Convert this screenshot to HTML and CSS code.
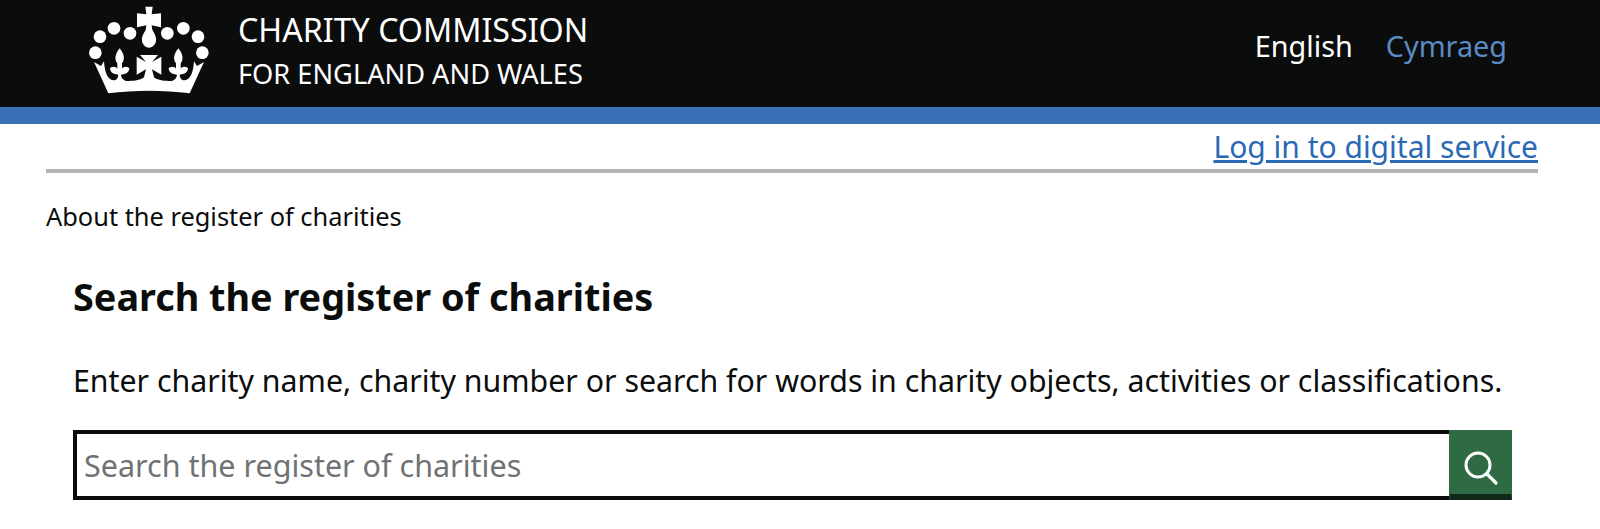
FILE: index.html
```html
<!DOCTYPE html>
<html lang="en">
<head>
    <meta charset="UTF-8">
    <meta name="viewport" content="width=device-width, initial-scale=1.0">
    <title>Search the register of charities</title>
    <link rel="stylesheet" href="styles.css">
</head>
<body>
<header class="site-header">
    <div class="brand">
        <svg class="crest" viewBox="0 0 420 315" aria-hidden="true">
            <circle cx="60" cy="110" r="19"/>
            <circle cx="102" cy="85" r="19"/>
            <circle cx="150" cy="100" r="19"/>
            <circle cx="262" cy="100" r="19"/>
            <circle cx="310" cy="85" r="19"/>
            <circle cx="354" cy="110" r="19"/>
            <circle cx="46" cy="158" r="19"/>
            <circle cx="367" cy="158" r="19"/>
            <path d="M196 20H218L215 43 243 40V82L215 76 217 90C226 104 230 114 228 124 225 136 216 143 207 143 198 143 189 136 186 124 184 114 188 104 197 90L199 76 171 82V40L199 43Z"/>
            <path id="crownHalf" d="M42 186L63 198 72 184C74 215 82 240 100 241 110 241 114 234 115 224L102 221C94 218 90 212 90 204 100 198 108 200 112 206L112 190C102 178 106 160 119 145 132 160 136 178 126 190L126 206C130 200 138 198 148 204 148 212 144 218 136 221L123 224C124 236 132 244 148 243 165 243 182 240 192 232L198 208 170 224 170 170 198 186 180 165H208V272C165 272 125 275 85 280Z"/>
            <use href="#crownHalf" transform="translate(414) scale(-1,1)"/>
        </svg>
        <div class="brand-text">
            <span class="brand-name">CHARITY COMMISSION</span>
            <span class="brand-sub">FOR ENGLAND AND WALES</span>
        </div>
    </div>
    <nav class="lang-nav">
        <a href="#" class="lang-current">English</a>
        <a href="#" class="lang-other">Cymraeg</a>
    </nav>
</header>
<div class="header-rule"></div>

<div class="container">
    <div class="top-links">
        <a href="#" class="login-link">Log in to digital service</a>
    </div>
    <p class="crumb">About the register of charities</p>
    <main class="search-panel">
        <h1>Search the register of charities</h1>
        <p class="hint">Enter charity name, charity number or search for words in charity objects, activities or classifications.</p>
        <form class="search-form">
            <input class="search-input" type="text" placeholder="Search the register of charities">
            <button class="search-btn" type="button" aria-label="Search">
                <svg viewBox="0 0 36 36" width="36" height="36" aria-hidden="true">
                    <circle cx="15" cy="15" r="12" fill="none" stroke="#fff" stroke-width="3"/>
                    <path d="M24 24L33 33" fill="none" stroke="#fff" stroke-width="3.2" stroke-linecap="round"/>
                </svg>
            </button>
        </form>
    </main>
</div>
</body>
</html>
```

FILE: styles.css
```css
/* General Styles */
body {
    font-family: 'Noto Sans', Arial, sans-serif;
    margin: 0;
    padding: 0;
    background: #fff;
    color: #0b0c0c;
}

/* Header */
.site-header {
    display: flex;
    justify-content: space-between;
    height: 107px;
    padding: 0 93px 0 80px;
    background: #0b0c0c;
}

.brand {
    display: flex;
    gap: 18px;
}

.crest {
    width: 140px;
    height: 105px;
    fill: #fff;
}

.brand-text {
    display: flex;
    flex-direction: column;
    padding-top: 10px;
    color: #fff;
}

.brand-name {
    font-size: 32.2px;
    line-height: 40px;
}

.brand-sub {
    font-size: 27.2px;
    line-height: 34px;
    margin-top: 7px;
}

.lang-nav {
    display: flex;
    gap: 33px;
    padding-top: 27px;
    font-size: 28.8px;
    line-height: 38px;
}

.lang-nav a {
    text-decoration: none;
}

.lang-current {
    color: #fff;
}

.lang-other {
    color: #5b8ac4;
}

.header-rule {
    height: 17px;
    background: #3a70b5;
}

/* Main content */
.container {
    padding: 0 62px 0 46px;
}

.top-links {
    display: flex;
    justify-content: flex-end;
    height: 45px;
    border-bottom: 4px solid #b1b4b6;
}

.login-link {
    font-size: 30px;
    line-height: 46px;
    color: #2a69b4;
}

.crumb {
    margin: 26px 0 0;
    font-size: 25.4px;
    line-height: 34px;
}

.search-panel {
    padding: 0 26px 0 27px;
}

h1 {
    margin: 39px 0 0;
    font-size: 37.8px;
    line-height: 50px;
    font-weight: 700;
}

.hint {
    margin: 39px 0 0;
    font-size: 30.3px;
    line-height: 40px;
}

.search-form {
    display: flex;
    margin-top: 29px;
}

.search-input {
    flex: 1;
    box-sizing: border-box;
    height: 70px;
    padding: 0 7px;
    border: 4px solid #0b0c0c;
    border-right: 0;
    border-radius: 0;
    outline: none;
    font-family: inherit;
    font-size: 30.5px;
}

.search-input::placeholder {
    color: #6f7274;
    opacity: 1;
}

.search-btn {
    display: flex;
    align-items: center;
    justify-content: center;
    box-sizing: border-box;
    width: 63px;
    height: 70px;
    padding: 11px 0 0;
    background: #2f6b42;
    border: 1px solid #2f6b42;
    border-bottom: 6px solid #10291a;
    cursor: pointer;
}
```
